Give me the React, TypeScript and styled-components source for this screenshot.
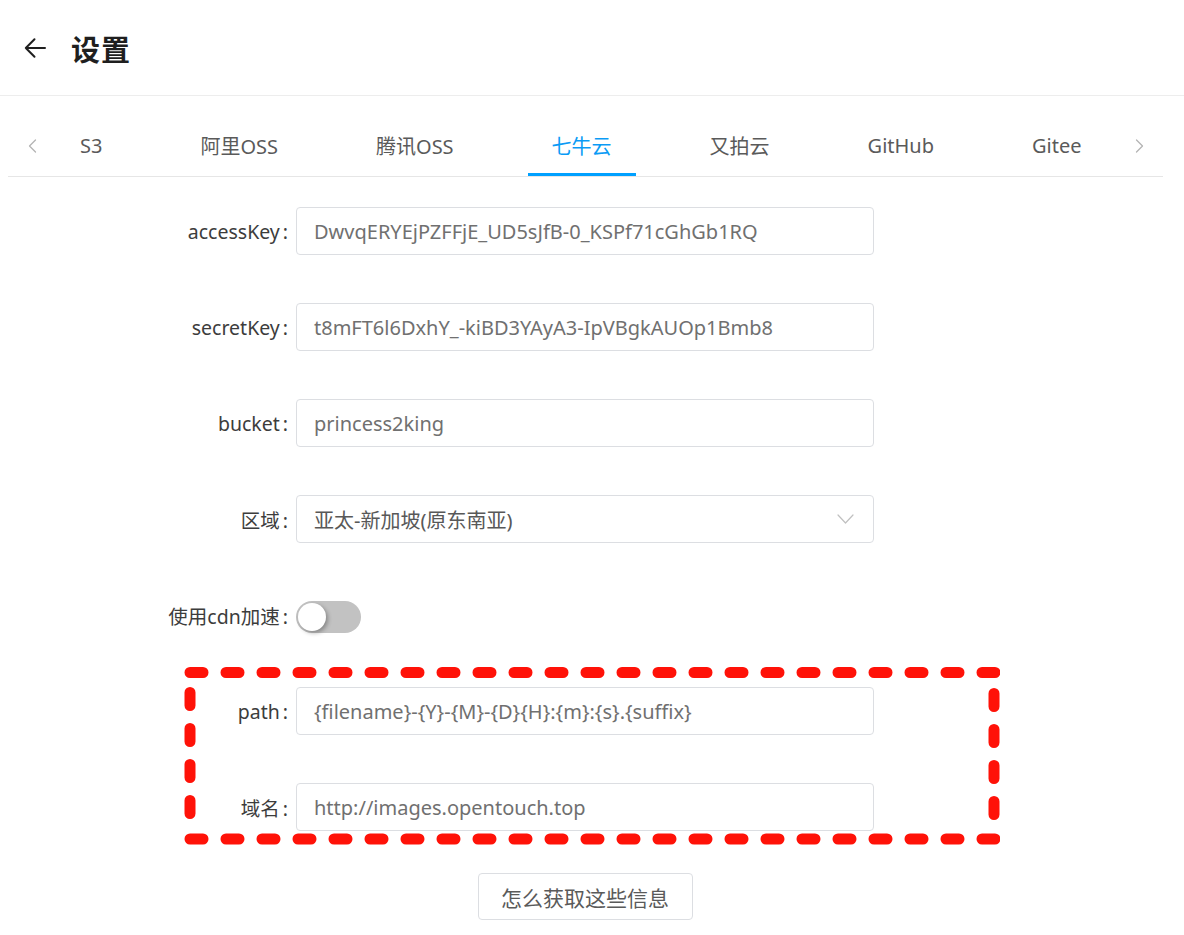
import styled, { createGlobalStyle } from "styled-components";

const GlobalStyle = createGlobalStyle`
  body {
    margin: 0;
    background: #fff;
    font-family: "Noto Sans", "Noto Sans CJK SC", sans-serif;
    color: #333;
  }
`;

const tabs = ["S3", "阿里OSS", "腾讯OSS", "七牛云", "又拍云", "GitHub", "Gitee"];
const activeTab = "七牛云";

const fields = [
  { label: "accessKey", value: "DwvqERYEjPZFFjE_UD5sJfB-0_KSPf71cGhGb1RQ" },
  { label: "secretKey", value: "t8mFT6l6DxhY_-kiBD3YAyA3-IpVBgkAUOp1Bmb8" },
  { label: "bucket", value: "princess2king" },
];

const BackIcon = () => (
  <svg width="22" height="22" viewBox="0 0 22 22" fill="none">
    <path d="M21 11H1.8M10.5 2.2L1.8 11l8.7 8.8" stroke="#1f1f1f" strokeWidth="2" strokeLinecap="round" strokeLinejoin="round" />
  </svg>
);

const Chevron = ({ dir }: { dir: "left" | "right" }) => (
  <svg width="9" height="14" viewBox="0 0 9 14" fill="none">
    <path d={dir === "left" ? "M7.5 1L1.5 7l6 6" : "M1.5 1l6 6-6 6"} stroke="#b4b4b4" strokeWidth="1.3" strokeLinecap="round" strokeLinejoin="round" />
  </svg>
);

const DownIcon = () => (
  <svg width="17" height="10" viewBox="0 0 17 10" fill="none">
    <path d="M1 1l7.5 8L16 1" stroke="#c0c0c0" strokeWidth="1.2" strokeLinecap="round" strokeLinejoin="round" />
  </svg>
);

// red dashed marker drawn round the optional cdn fields
const Highlight = () => (
  <Marker width="816" height="178" viewBox="0 0 816 178" fill="none">
    <g stroke="#ff1208" strokeWidth="11" strokeLinecap="round" strokeDasharray="13 23">
      <path d="M6 5.5H812" />
      <path d="M6 172H812" />
      <path d="M6 25.5V160" />
      <path d="M810 26.5V160" />
    </g>
  </Marker>
);

const App = () => {
  return (
    <>
      <GlobalStyle />
      <Header>
        <BackButton>
          <BackIcon />
        </BackButton>
        <Title>设置</Title>
      </Header>

      <TabBar>
        <ArrowButton>
          <Chevron dir="left" />
        </ArrowButton>
        <TabList>
          {tabs.map((t) => (
            <Tab key={t} $active={t === activeTab}>
              {t}
            </Tab>
          ))}
        </TabList>
        <ArrowButton>
          <Chevron dir="right" />
        </ArrowButton>
      </TabBar>

      <Form>
        {fields.map((f) => (
          <Row key={f.label}>
            <Label>
              {f.label}
              <Colon>:</Colon>
            </Label>
            <Input>{f.value}</Input>
          </Row>
        ))}
        <Row>
          <Label>
            区域<Colon>:</Colon>
          </Label>
          <Select>
            <span>亚太-新加坡(原东南亚)</span>
            <DownIcon />
          </Select>
        </Row>
        <Row>
          <Label>
            使用cdn加速<Colon>:</Colon>
          </Label>
          <Switch>
            <Knob />
          </Switch>
        </Row>
        <CdnGroup>
          <Highlight />
          <Row>
            <Label>
              path<Colon>:</Colon>
            </Label>
            <Input>{"{filename}-{Y}-{M}-{D}{H}:{m}:{s}.{suffix}"}</Input>
          </Row>
          <Row $last>
            <Label>
              域名<Colon>:</Colon>
            </Label>
            <Input>http://images.opentouch.top</Input>
          </Row>
        </CdnGroup>
        <Actions>
          <HelpButton>怎么获取这些信息</HelpButton>
        </Actions>
      </Form>
    </>
  );
};

export default App;

const Header = styled.header`
  display: flex;
  align-items: center;
  gap: 25px;
  height: 95px;
  padding-left: 24px;
  border-bottom: 1px solid #ededed;
`;

const BackButton = styled.div`
  display: flex;
  align-items: center;
  width: 22px;
  height: 22px;
`;

const Title = styled.h1`
  margin: 0;
  font-size: 29px;
  font-weight: 700;
  color: #1f1f1f;
  letter-spacing: 1px;
`;

const TabBar = styled.nav`
  display: flex;
  align-items: stretch;
  margin: 20px 21px 0 8px;
  height: 60px;
  border-bottom: 1px solid #e6e6e6;
`;

const ArrowButton = styled.div`
  width: 48px;
  display: flex;
  align-items: center;
  justify-content: center;
`;

const TabList = styled.div`
  flex: 1;
  display: flex;
  gap: 50px;
  overflow: hidden;
`;

const Tab = styled.div<{ $active?: boolean }>`
  display: flex;
  align-items: center;
  padding: 2px 24px 0;
  font-size: 20px;
  white-space: nowrap;
  color: ${(p) => (p.$active ? "#0a9bf5" : "#5a5a5a")};
  border-bottom: 4px solid ${(p) => (p.$active ? "#00a0ff" : "transparent")};
  margin-bottom: -1px;
`;

const Form = styled.form`
  display: flex;
  flex-direction: column;
  padding-top: 30px;
`;

const Row = styled.div<{ $last?: boolean }>`
  display: grid;
  grid-template-columns: 296px 578px;
  align-items: center;
  height: 48px;
  margin-bottom: ${(p) => (p.$last ? "0" : "48px")};
`;

const Label = styled.label`
  text-align: right;
  padding-right: 8px;
  font-size: 19.5px;
  color: #3c3c3c;
  white-space: nowrap;
`;

const Colon = styled.span`
  margin-left: 3px;
`;

const Input = styled.div`
  box-sizing: border-box;
  height: 48px;
  display: flex;
  align-items: center;
  padding: 0 17px;
  border: 1px solid #dcdee2;
  border-radius: 4px;
  font-size: 20px;
  color: #707070;
  white-space: nowrap;
  overflow: hidden;
`;

const Select = styled(Input)`
  justify-content: space-between;
  padding-right: 19px;
  color: #585858;
`;

const Switch = styled.div`
  position: relative;
  width: 65px;
  height: 32px;
  margin-top: 4px;
  border-radius: 16px;
  background: #c2c2c2;
`;

const Knob = styled.div`
  position: absolute;
  top: 2px;
  left: 2px;
  width: 28px;
  height: 28px;
  border-radius: 50%;
  background: #fff;
  box-shadow: 2px 2px 4px rgba(0, 0, 0, 0.3);
`;

const CdnGroup = styled.div`
  position: relative;
`;

const Marker = styled.svg`
  position: absolute;
  left: 184px;
  top: -20px;
  pointer-events: none;
`;

const Actions = styled.div`
  margin: 42px 0 0 296px;
  width: 578px;
  display: flex;
  justify-content: center;
`;

const HelpButton = styled.button`
  width: 215px;
  height: 47px;
  background: #fff;
  border: 1px solid #dcdee2;
  border-radius: 4px;
  font-family: inherit;
  font-size: 21px;
  color: #5a5a5a;
`;
